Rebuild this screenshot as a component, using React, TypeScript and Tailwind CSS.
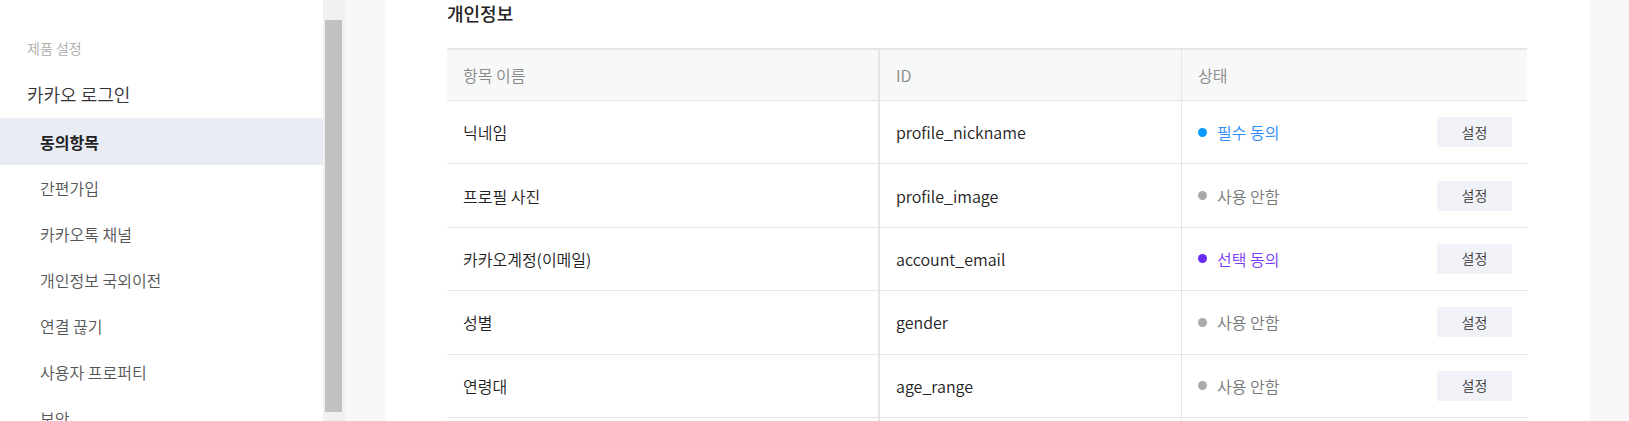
import React from "react";

const font = { fontFamily: '"Noto Sans CJK KR", "Noto Sans", sans-serif' };

const menu = ["동의항목", "간편가입", "카카오톡 채널", "개인정보 국외이전", "연결 끊기", "사용자 프로퍼티", "보안"];

type Status = "required" | "optional" | "off";

const rows: { name: string; id: string; status: Status }[] = [
  { name: "닉네임", id: "profile_nickname", status: "required" },
  { name: "프로필 사진", id: "profile_image", status: "off" },
  { name: "카카오계정(이메일)", id: "account_email", status: "optional" },
  { name: "성별", id: "gender", status: "off" },
  { name: "연령대", id: "age_range", status: "off" },
];

function StatusLabel({ status }: { status: Status }) {
  if (status === "required") {
    return (
      <span className="flex items-center gap-[10px] text-[#2e8ef7]">
        <span className="w-[9px] h-[9px] rounded-full bg-[#0a9bff]" />
        필수 동의
      </span>
    );
  }
  if (status === "optional") {
    return (
      <span className="flex items-center gap-[10px] text-[#7b3dfb]">
        <span className="w-[9px] h-[9px] rounded-full bg-[#6a2cf5]" />
        선택 동의
      </span>
    );
  }
  return (
    <span className="flex items-center gap-[10px] text-[#777]">
      <span className="w-[9px] h-[9px] rounded-full bg-[#aaaaaa]" />
      사용 안함
    </span>
  );
}

export default function App() {
  return (
    <div className="flex w-full h-[421px] overflow-hidden bg-white font-[350]" style={font}>
      {/* sidebar */}
      <aside className="w-[323px] shrink-0 bg-white pt-[38px]">
        <div className="pl-[27px] text-[14px] leading-[20px] text-[#aaa]">제품 설정</div>
        <div className="pl-[27px] mt-[22px] text-[18px] leading-[28px] text-[#333]">카카오 로그인</div>
        <ul className="mt-[10px]">
          {menu.map((m, i) => (
            <li
              key={m}
              className={
                i === 0
                  ? "h-[47px] flex items-center pl-[40px] bg-[#e9ecf3] text-[16px] font-bold text-[#222]"
                  : "h-[46px] flex items-center pl-[40px] text-[16px] text-[#555]"
              }
            >
              {m}
            </li>
          ))}
        </ul>
      </aside>

      {/* scrollbar */}
      <div className="w-[22px] shrink-0 bg-[#f1f1f1] pl-[2px] pt-[20px]">
        <div className="w-[17px] h-[392px] bg-[#c1c1c1]" />
      </div>

      <div className="w-[40px] shrink-0 bg-[#f7f8f8]" />

      {/* main */}
      <main className="w-[1205px] shrink-0 bg-white pl-[62px]">
        <h2 className="text-[18px] leading-[26px] text-[#222] font-medium">개인정보</h2>
        <div className="mt-[22px] w-[1080px] border-t-2 border-[#e5e5e5] text-[16px]">
          <div className="flex h-[51px] bg-[#f7f8f8] border-b border-[#e5e5e5] text-[#888]">
            <div className="w-[433px] shrink-0 border-r-2 border-[#e5e5e5] flex items-center px-4">항목 이름</div>
            <div className="w-[302px] shrink-0 border-r border-[#e5e5e5] flex items-center px-4">ID</div>
            <div className="flex-1 flex items-center px-4">상태</div>
          </div>
          {rows.map((r) => (
            <div key={r.id} className="flex h-[63.4px] border-b border-[#e5e5e5] text-[#222]">
              <div className="w-[433px] shrink-0 border-r-2 border-[#e5e5e5] flex items-center px-4">{r.name}</div>
              <div className="w-[302px] shrink-0 border-r border-[#e5e5e5] flex items-center px-4">{r.id}</div>
              <div className="flex-1 flex items-center justify-between pl-4 pr-[15px]">
                <StatusLabel status={r.status} />
                <button className="w-[75px] h-[30px] bg-[#f1f2f8] text-[14px] text-[#333]">설정</button>
              </div>
            </div>
          ))}
          <div className="flex h-[20px]">
            <div className="w-[433px] shrink-0 border-r-2 border-[#e5e5e5]" />
            <div className="w-[302px] shrink-0 border-r border-[#e5e5e5]" />
          </div>
        </div>
      </main>

      <div className="flex-1 bg-[#f7f8f8]" />
    </div>
  );
}
